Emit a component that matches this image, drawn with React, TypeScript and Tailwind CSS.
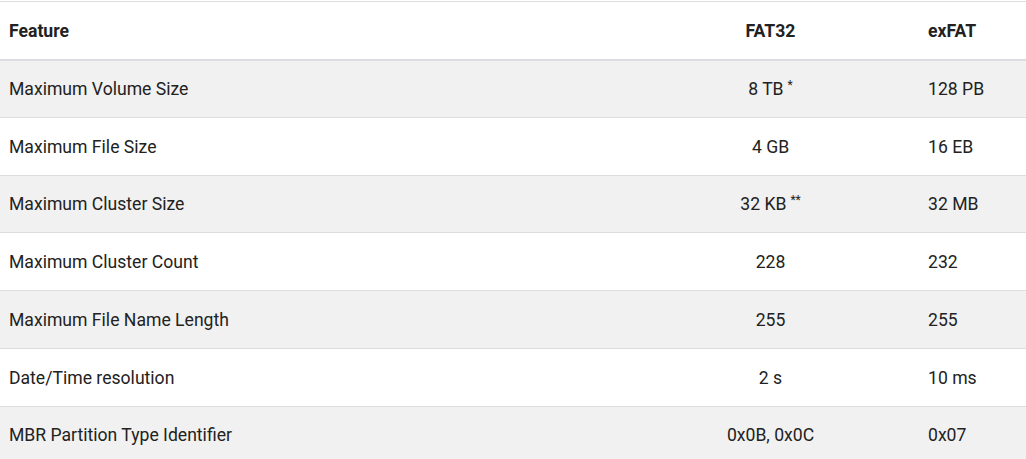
const rows: { feature: string; fat32: string; sup?: string; exfat: string }[] = [
  { feature: "Maximum Volume Size", fat32: "8 TB", sup: "*", exfat: "128 PB" },
  { feature: "Maximum File Size", fat32: "4 GB", exfat: "16 EB" },
  { feature: "Maximum Cluster Size", fat32: "32 KB", sup: "**", exfat: "32 MB" },
  { feature: "Maximum Cluster Count", fat32: "228", exfat: "232" },
  { feature: "Maximum File Name Length", fat32: "255", exfat: "255" },
  { feature: "Date/Time resolution", fat32: "2 s", exfat: "10 ms" },
  { feature: "MBR Partition Type Identifier", fat32: "0x0B, 0x0C", exfat: "0x07" },
];

export default function App() {
  return (
    <div className="w-[1026px] h-[459px] overflow-hidden bg-white pt-px font-['Roboto',sans-serif] text-[17.6px] text-[#222]">
      <table className="w-full border-collapse table-fixed">
        <colgroup>
          <col className="w-[622px]" />
          <col className="w-[297px]" />
          <col />
        </colgroup>
        <thead>
          <tr className="h-[58px] border-t border-b-2 border-[#dcdde0]">
            <th className="pl-[9px] pt-[2px] text-left font-bold">Feature</th>
            <th className="pt-[2px] text-center font-bold">FAT32</th>
            <th className="pl-[9px] pt-[2px] text-left font-bold">exFAT</th>
          </tr>
        </thead>
        <tbody>
          {rows.map((r, i) => (
            <tr
              key={r.feature}
              className={`h-[57.8px] border-b border-[#dcdde0] ${i % 2 === 0 ? "bg-[#f1f1f1]" : "bg-white"}`}
            >
              <td className="pl-[9px] pt-px">{r.feature}</td>
              <td className="text-center pt-px">
                {r.fat32}
                {r.sup && <sup className="ml-1 text-[12px]">{r.sup}</sup>}
              </td>
              <td className="pl-[9px] pt-px">{r.exfat}</td>
            </tr>
          ))}
        </tbody>
      </table>
    </div>
  );
}
